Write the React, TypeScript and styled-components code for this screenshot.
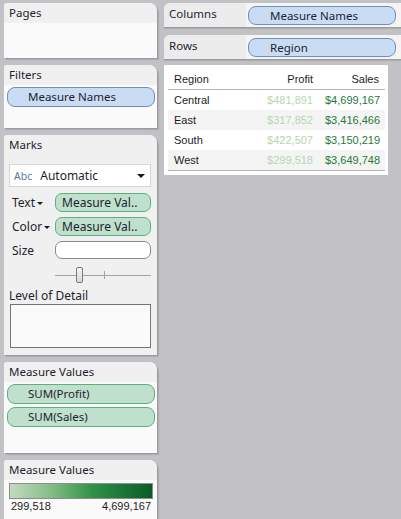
import styled, { createGlobalStyle } from "styled-components";

const GlobalStyle = createGlobalStyle`
  html, body {
    margin: 0;
    padding: 0;
    background: #c2c2c6;
  }
  body {
    font-family: "Noto Sans", "Open Sans", sans-serif;
    font-size: 11.5px;
    color: #1e1e2e;
  }
`;

type Row = { region: string; profit: string; sales: string };

const rows: Row[] = [
  { region: "Central", profit: "$481,891", sales: "$4,699,167" },
  { region: "East", profit: "$317,852", sales: "$3,416,466" },
  { region: "South", profit: "$422,507", sales: "$3,150,219" },
  { region: "West", profit: "$299,518", sales: "$3,649,748" },
];

function App() {
  return (
    <>
      <GlobalStyle />
      <StPage>
        <StLeft>
          <StPanel $height={55}>
            <StHeader>Pages</StHeader>
          </StPanel>

          <StPanel $height={63}>
            <StHeader>Filters</StHeader>
            <StPill $tone="blue">Measure Names</StPill>
          </StPanel>

          <StPanel $height={220} $bg="#f0f0f0">
            <StHeader>Marks</StHeader>
            <StDropdown>
              <StAbc>Abc</StAbc>
              Automatic
              <StCaret $size={4} />
            </StDropdown>
            <StMarkRow $top={6}>
              <StMarkLabel>
                Text<StCaret $size={3} />
              </StMarkLabel>
              <StMarkPill>Measure Val..</StMarkPill>
            </StMarkRow>
            <StMarkRow $top={5}>
              <StMarkLabel>
                Color<StCaret $size={3} />
              </StMarkLabel>
              <StMarkPill>Measure Val..</StMarkPill>
            </StMarkRow>
            <StMarkRow $top={5}>
              <StMarkLabel>Size</StMarkLabel>
              <StSizeBox />
            </StMarkRow>
            <StSlider>
              <StTrack>
                <StTick />
                <StThumb />
              </StTrack>
            </StSlider>
            <StDetailLabel>Level of Detail</StDetailLabel>
            <StDetailBox />
          </StPanel>

          <StPanel $height={91}>
            <StHeader>Measure Values</StHeader>
            <StPill $tone="green">SUM(Profit)</StPill>
            <StPill $tone="green" $top={3}>SUM(Sales)</StPill>
          </StPanel>

          <StPanel $grow>
            <StHeader>Measure Values</StHeader>
            <StGradient />
            <StLegendLabels>
              <span>299,518</span>
              <span>4,699,167</span>
            </StLegendLabels>
          </StPanel>
        </StLeft>

        <StRight>
          <StShelf>
            <StShelfLabel>Columns</StShelfLabel>
            <StShelfPill>Measure Names</StShelfPill>
          </StShelf>
          <StShelf $top={8}>
            <StShelfLabel>Rows</StShelfLabel>
            <StShelfPill>Region</StShelfPill>
          </StShelf>

          <StCard>
            <StTable>
              <StHeadRow>
                <StCell>Region</StCell>
                <StCell $right>Profit</StCell>
                <StCell $right>Sales</StCell>
              </StHeadRow>
              {rows.map((r, i) => (
                <StBodyRow key={r.region} $odd={i % 2 === 1}>
                  <StCell>{r.region}</StCell>
                  <StCell $right $color="#b8d4b4">{r.profit}</StCell>
                  <StCell $right $color="#1f7a38">{r.sales}</StCell>
                </StBodyRow>
              ))}
            </StTable>
          </StCard>
        </StRight>
      </StPage>
    </>
  );
}

export default App;

const StPage = styled.div`
  display: flex;
  gap: 7px;
  padding: 3px 0 0 4px;
  height: 519px;
  box-sizing: border-box;
  overflow: hidden;
`;

const StLeft = styled.div`
  width: 153px;
  flex-shrink: 0;
  display: flex;
  flex-direction: column;
  gap: 7px;
`;

const StRight = styled.div`
  flex: 1;
  display: flex;
  flex-direction: column;
  align-items: flex-start;
  min-width: 0;
`;

const StPanel = styled.div<{ $height?: number; $bg?: string; $grow?: boolean }>`
  height: ${(p) => (p.$height ? `${p.$height}px` : "auto")};
  flex: ${(p) => (p.$grow ? "1" : "none")};
  background: ${(p) => p.$bg || "#fafafa"};
  border-radius: 3px 8px 0 0;
  box-shadow: 1px 1px 0 #9c9ca0, 2px 2px 1px rgba(0, 0, 0, 0.12);
  display: flex;
  flex-direction: column;
  overflow: hidden;
`;

const StHeader = styled.div`
  height: 20px;
  line-height: 19px;
  padding-left: 5px;
  background: #f0f0f0;
  flex-shrink: 0;
`;

const StPill = styled.div<{ $tone: "blue" | "green"; $top?: number }>`
  margin: ${(p) => p.$top ?? 2}px 2px 0 3px;
  height: 20px;
  line-height: 18px;
  box-sizing: border-box;
  padding-left: 20px;
  border-radius: 8px;
  background: ${(p) => (p.$tone === "blue" ? "#c9dcf3" : "#bfe0cc")};
  border: 1px solid ${(p) => (p.$tone === "blue" ? "#6f8fb4" : "#5fae82")};
`;

const StDropdown = styled.div`
  position: relative;
  margin: 9px 6px 0 5px;
  height: 23px;
  box-sizing: border-box;
  background: #ffffff;
  border: 1px solid #d6d6d6;
  display: flex;
  align-items: center;
  padding-left: 4px;
  font-size: 12px;
  span:last-child {
    position: absolute;
    right: 5px;
    top: 9px;
  }
`;

const StAbc = styled.span`
  color: #5b7896;
  font-size: 10.5px;
  margin-right: 8px;
`;

const StCaret = styled.span<{ $size: number }>`
  display: inline-block;
  width: 0;
  height: 0;
  margin-left: 2px;
  vertical-align: middle;
  border-left: ${(p) => p.$size}px solid transparent;
  border-right: ${(p) => p.$size}px solid transparent;
  border-top: ${(p) => p.$size}px solid #1a1a1a;
`;

const StMarkRow = styled.div<{ $top: number }>`
  display: grid;
  grid-template-columns: 51px 96px;
  align-items: center;
  margin-top: ${(p) => p.$top}px;
`;

const StMarkLabel = styled.div`
  padding-left: 8px;
  font-size: 12px;
`;

const StMarkPill = styled.div`
  height: 19px;
  line-height: 17px;
  box-sizing: border-box;
  padding-left: 6px;
  border-radius: 7px;
  background: #bfe0cc;
  border: 1px solid #5fae82;
  font-size: 12px;
  white-space: nowrap;
  overflow: hidden;
`;

const StSizeBox = styled.div`
  height: 18px;
  box-sizing: border-box;
  border-radius: 7px;
  background: #ffffff;
  border: 1px solid #8a8a8a;
`;

const StSlider = styled.div`
  margin-top: 4px;
  height: 24px;
  padding-left: 51px;
  width: 96px;
  display: flex;
  align-items: center;
`;

const StTrack = styled.div`
  position: relative;
  width: 96px;
  height: 1px;
  background: #a4a4a4;
`;

const StThumb = styled.div`
  position: absolute;
  left: 21px;
  top: -8px;
  width: 7px;
  height: 16px;
  box-sizing: border-box;
  border: 1px solid #7a7a7a;
  border-radius: 2px;
  background: linear-gradient(#f4f4f4, #d8d8d8);
`;

const StTick = styled.div`
  position: absolute;
  left: 49px;
  top: -4px;
  width: 1px;
  height: 8px;
  background: #a4a4a4;
`;

const StDetailLabel = styled.div`
  padding-left: 5px;
  height: 17px;
  line-height: 17px;
  font-size: 12px;
`;

const StDetailBox = styled.div`
  margin: 0 6px 0 6px;
  height: 44px;
  box-sizing: border-box;
  background: #fafafa;
  border: 1px solid #747474;
`;

const StGradient = styled.div`
  margin: 3px 4px 0 5px;
  height: 16px;
  box-sizing: border-box;
  border: 1px solid #8c8c8c;
  background: linear-gradient(to right, #c3dbbf, #82bb84 30%, #2f9148 58%, #0c5b27);
`;

const StLegendLabels = styled.div`
  display: flex;
  justify-content: space-between;
  padding: 1px 6px 0 7px;
  font-family: "Liberation Sans", Arial, sans-serif;
  font-size: 11px;
  color: #1a1a1a;
`;

const StShelf = styled.div<{ $top?: number }>`
  width: 100%;
  height: 24px;
  margin-top: ${(p) => p.$top ?? 0}px;
  display: flex;
  align-items: center;
  background: #f4f4f4;
  border-radius: 6px 0 0 0;
  box-shadow: 0 1px 0 #9c9ca0, 0 2px 1px rgba(0, 0, 0, 0.12);
  overflow: hidden;
`;

const StShelfLabel = styled.div`
  width: 77px;
  height: 100%;
  line-height: 22px;
  padding-left: 5px;
  background: #ececec;
  flex-shrink: 0;
`;

const StShelfPill = styled.div`
  margin-left: 2px;
  width: 148px;
  height: 19px;
  line-height: 17px;
  box-sizing: border-box;
  padding-left: 21px;
  border-radius: 8px;
  background: #c9dcf3;
  border: 1px solid #6f8fb4;
`;

const StCard = styled.div`
  margin-top: 6px;
  width: 224px;
  background: #ffffff;
  padding: 3px 3px 4px 4px;
  box-sizing: border-box;
`;

const StTable = styled.div`
  font-family: "Liberation Sans", Arial, sans-serif;
  font-size: 11px;
  color: #1c1c1c;
  border-bottom: 1px solid #b4b4b4;
`;

const StHeadRow = styled.div`
  display: grid;
  grid-template-columns: 1fr 70px 66px;
  height: 21px;
  align-items: center;
  border-bottom: 1px solid #b4b4b4;
`;

const StBodyRow = styled.div<{ $odd: boolean }>`
  display: grid;
  grid-template-columns: 1fr 70px 66px;
  height: 20px;
  align-items: center;
  background: ${(p) => (p.$odd ? "#f4f4f4" : "#ffffff")};
`;

const StCell = styled.div<{ $right?: boolean; $color?: string }>`
  padding: 0 6px;
  text-align: ${(p) => (p.$right ? "right" : "left")};
  color: ${(p) => p.$color || "inherit"};
`;
